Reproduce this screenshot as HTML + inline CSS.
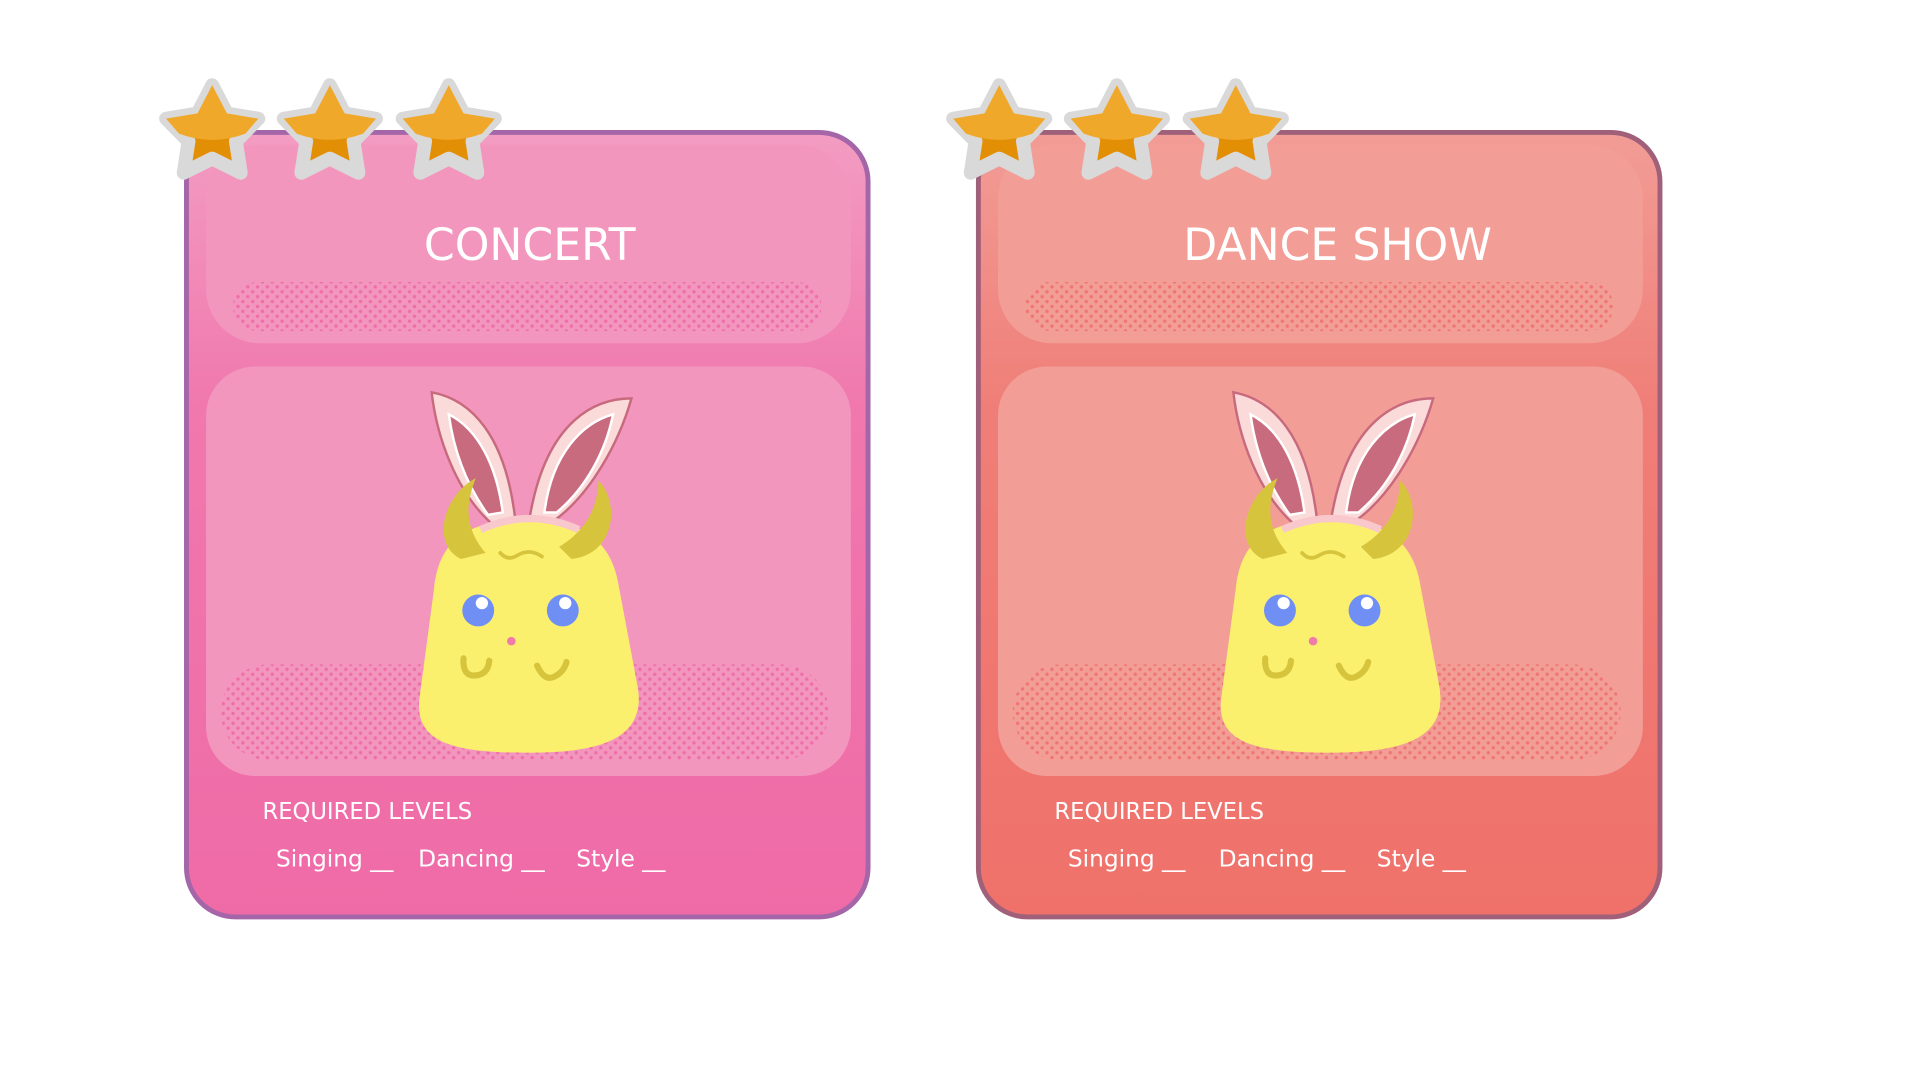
<!DOCTYPE html>
<html><head><meta charset="utf-8"><style>
html,body{margin:0;padding:0;background:#fff;width:1920px;height:1080px;overflow:hidden}
svg{display:block}
text{font-family:"DejaVu Sans","Liberation Sans",sans-serif;fill:#fff}
</style></head><body>
<svg width="1920" height="1080" viewBox="0 0 1566 881" xmlns="http://www.w3.org/2000/svg">
<defs>
<pattern id="d1" width="8" height="8" patternUnits="userSpaceOnUse"><circle cx="2" cy="2" r="1.4" fill="#ee6ea9"/><circle cx="6" cy="6" r="1.4" fill="#ee6ea9"/></pattern>
<pattern id="d2" width="8" height="8" patternUnits="userSpaceOnUse"><circle cx="2" cy="2" r="1.4" fill="#ef7575"/><circle cx="6" cy="6" r="1.4" fill="#ef7575"/></pattern>
<linearGradient id="g1" x1="0" y1="0" x2="0" y2="1"><stop offset="0" stop-color="#f39cc2"/><stop offset="0.35" stop-color="#f078ad"/><stop offset="1" stop-color="#ef6ba7"/></linearGradient>
<linearGradient id="g2" x1="0" y1="0" x2="0" y2="1"><stop offset="0" stop-color="#f29c96"/><stop offset="0.35" stop-color="#f07e78"/><stop offset="1" stop-color="#ef716a"/></linearGradient>
<g id="star"><g transform="translate(0,4) scale(1.13)"><path d="M0,-35 L10.6,-14.6 L33.3,-10.8 L17.1,5.6 L20.6,28.3 L0,18 L-20.6,28.3 L-17.1,5.6 L-33.3,-10.8 L-10.6,-14.6 Z" fill="#e38f05" stroke="#d9d9d9" stroke-width="10" stroke-linejoin="round"/><path d="M0,-35 L10.6,-14.6 L33.3,-10.8 L24,0 Q0,9 -24,0 L-33.3,-10.8 L-10.6,-14.6 Z" fill="#f0a82a"/></g></g>
<g id="bunny">
<path d="M352,320 C385,326 412,356 420,422 L402,428 C372,402 356,356 352,320 Z" fill="#fbdada" stroke="#c86a7d" stroke-width="2"/>
<path d="M366,338 C390,350 405,380 410,418 L398,420 C380,395 370,368 366,338 Z" fill="#c96b7e" stroke="#fff" stroke-width="2"/>
<path d="M515,325 C488,325 446,340 432,422 L450,426 C482,404 505,360 515,325 Z" fill="#fbdada" stroke="#c86a7d" stroke-width="2"/>
<path d="M500,338 C475,345 450,370 444,418 L454,418 C478,398 494,368 500,338 Z" fill="#c96b7e" stroke="#fff" stroke-width="2"/>
<path d="M354,480 C358,440 382,424 430,424 C480,424 500,445 505,480 L520,560 C528,605 485,614 430,614 C370,614 338,606 342,570 Z" fill="#fbef6e"/>
<path d="M392,432 Q432,414 472,432" fill="none" stroke="#f9c8cc" stroke-width="6"/>
<path d="M388,390 C360,405 352,445 376,456 L396,451 C378,430 380,410 388,390 Z" fill="#d6c43c"/>
<path d="M488,392 C506,410 502,452 466,456 L456,446 C480,432 488,410 488,392 Z" fill="#d6c43c"/>
<circle cx="390" cy="498" r="13" fill="#6f8ff5"/><circle cx="393" cy="492" r="5" fill="#fff"/>
<circle cx="459" cy="498" r="13" fill="#6f8ff5"/><circle cx="461" cy="492" r="5" fill="#fff"/>
<circle cx="417" cy="523" r="3.5" fill="#f07aa8"/>
<path d="M378,537 Q377,552 388,551 Q398,550 399,539" fill="none" stroke="#d6c43c" stroke-width="5" stroke-linecap="round"/>
<path d="M438,543 Q444,556 452,552 Q460,548 462,540" fill="none" stroke="#d6c43c" stroke-width="5" stroke-linecap="round"/>
<path d="M408,451 Q414,458 422,453 Q432,447 442,454" fill="none" stroke="#d6c43c" stroke-width="3" stroke-linecap="round"/>
</g>
</defs>

<!-- card 1 -->
<rect x="152" y="108" width="556" height="640" rx="40" fill="url(#g1)" stroke="#a466a8" stroke-width="4"/>
<rect x="168" y="118" width="526" height="162" rx="44" fill="#f396be"/>
<rect x="190" y="230" width="480" height="40" rx="20" fill="url(#d1)"/>
<text x="432" y="212" text-anchor="middle" font-size="36">CONCERT</text>
<rect x="168" y="299" width="526" height="334" rx="40" fill="#f396be"/>
<rect x="180" y="542" width="496" height="78" rx="39" fill="url(#d1)"/>
<use href="#bunny"/>
<text x="214" y="668" font-size="18.5">REQUIRED LEVELS</text>
<text x="225" y="707" font-size="19">Singing __</text>
<text x="341" y="707" font-size="19">Dancing __</text>
<text x="470" y="707" font-size="19">Style __</text>
<use href="#star" x="173" y="105"/><use href="#star" x="269" y="105"/><use href="#star" x="366" y="105"/>

<!-- card 2 -->
<rect x="798" y="108" width="556" height="640" rx="40" fill="url(#g2)" stroke="#a0607a" stroke-width="4"/>
<rect x="814" y="118" width="526" height="162" rx="44" fill="#f29e96"/>
<rect x="836" y="230" width="480" height="40" rx="20" fill="url(#d2)"/>
<text x="1091" y="212" text-anchor="middle" font-size="36">DANCE SHOW</text>
<rect x="814" y="299" width="526" height="334" rx="40" fill="#f29e96"/>
<rect x="826" y="542" width="496" height="78" rx="39" fill="url(#d2)"/>
<use href="#bunny" x="654"/>
<text x="860" y="668" font-size="18.5">REQUIRED LEVELS</text>
<text x="871" y="707" font-size="19">Singing __</text>
<text x="994" y="707" font-size="19">Dancing __</text>
<text x="1123" y="707" font-size="19">Style __</text>
<use href="#star" x="815" y="105"/><use href="#star" x="911" y="105"/><use href="#star" x="1008" y="105"/>
</svg>
</body></html>
